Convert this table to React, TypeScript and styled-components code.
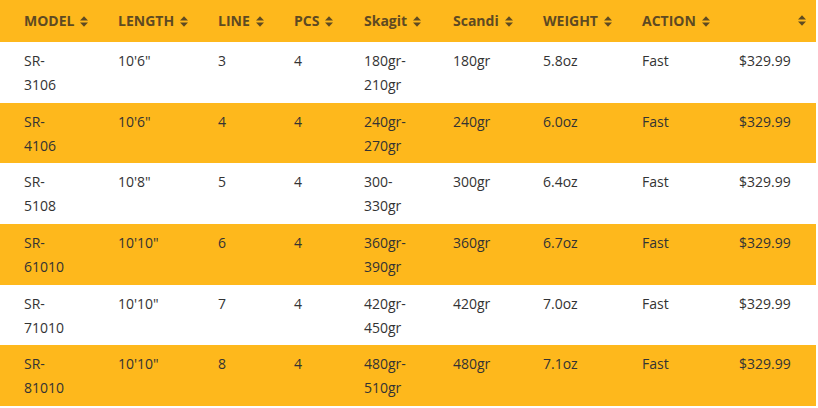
import React from 'react';
import styled, { createGlobalStyle } from 'styled-components';

const GlobalStyle = createGlobalStyle`
  html, body {
    margin: 0;
    padding: 0;
    background: #fff;
  }
  body {
    font-family: "Open Sans", "Liberation Sans", sans-serif;
  }
`;

const Table = styled.table`
  width: 816px;
  border-collapse: collapse;
  table-layout: fixed;
  font-size: 14px;
`;

const HeadCell = styled.th<{ $end?: boolean }>`
  background: #feb81c;
  color: #5e4a22;
  font-weight: 700;
  text-align: ${(p) => (p.$end ? 'right' : 'left')};
  line-height: 24px;
  padding: 9px ${(p) => (p.$end ? '10px' : '20px')} 9px 24px;
  white-space: nowrap;
`;

const HeadInner = styled.span`
  display: inline-flex;
  align-items: center;
  gap: 6px;
`;

const Row = styled.tr<{ $alt: boolean }>`
  background: ${(p) => (p.$alt ? '#feb81c' : '#ffffff')};
`;

const Cell = styled.td`
  color: #333;
  line-height: 24px;
  vertical-align: top;
  padding: 7px 20px 5.67px 24px;
`;

const SortIcon = () => (
  <svg width="8" height="11" viewBox="0 0 8 11" fill="#5e4a22">
    <path d="M0 4.5 L4 0.3 L8 4.5 Z" />
    <path d="M0 6.5 L4 10.7 L8 6.5 Z" />
  </svg>
);

const columns = [
  { label: 'MODEL', width: 94 },
  { label: 'LENGTH', width: 100 },
  { label: 'LINE', width: 76 },
  { label: 'PCS', width: 70 },
  { label: 'Skagit', width: 89 },
  { label: 'Scandi', width: 90 },
  { label: 'WEIGHT', width: 99 },
  { label: 'ACTION', width: 97 },
  { label: '', width: 101 },
];

const rows = [
  ['SR-3106', '10\'6"', '3', '4', '180gr-210gr', '180gr', '5.8oz', 'Fast', '$329.99'],
  ['SR-4106', '10\'6"', '4', '4', '240gr-270gr', '240gr', '6.0oz', 'Fast', '$329.99'],
  ['SR-5108', '10\'8"', '5', '4', '300-330gr', '300gr', '6.4oz', 'Fast', '$329.99'],
  ['SR-61010', '10\'10"', '6', '4', '360gr-390gr', '360gr', '6.7oz', 'Fast', '$329.99'],
  ['SR-71010', '10\'10"', '7', '4', '420gr-450gr', '420gr', '7.0oz', 'Fast', '$329.99'],
  ['SR-81010', '10\'10"', '8', '4', '480gr-510gr', '480gr', '7.1oz', 'Fast', '$329.99'],
];

const App: React.FC = () => {
  return (
    <>
      <GlobalStyle />
      <Table>
        <colgroup>
          {columns.map((c, i) => (
            <col key={i} style={{ width: c.width }} />
          ))}
        </colgroup>
        <thead>
          <tr>
            {columns.map((c, i) => (
              <HeadCell key={i} $end={c.label === ''}>
                <HeadInner>
                  {c.label}
                  <SortIcon />
                </HeadInner>
              </HeadCell>
            ))}
          </tr>
        </thead>
        <tbody>
          {rows.map((r, i) => (
            <Row key={i} $alt={i % 2 === 1}>
              {r.map((v, j) => (
                <Cell key={j}>{v}</Cell>
              ))}
            </Row>
          ))}
        </tbody>
      </Table>
    </>
  );
};

export default App;
